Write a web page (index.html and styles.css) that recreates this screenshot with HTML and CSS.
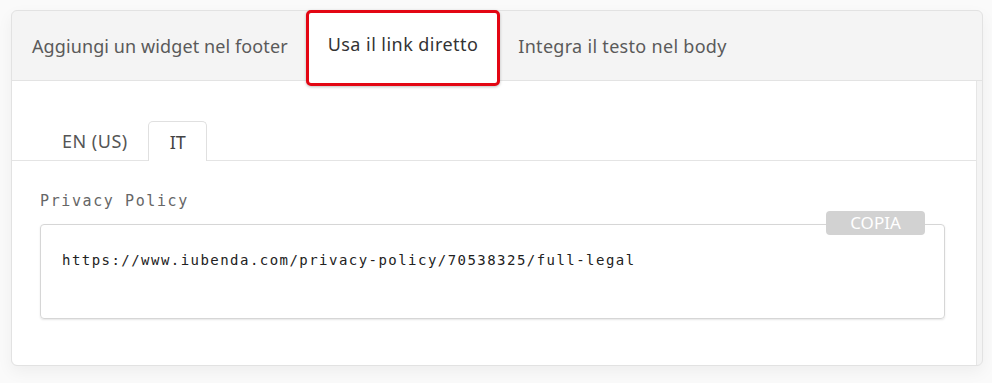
FILE: index.html
```html
<!DOCTYPE html>
<html lang="it">
<head>
    <meta charset="UTF-8">
    <meta name="viewport" content="width=device-width, initial-scale=1.0">
    <title>Link diretto</title>
    <link rel="stylesheet" href="styles.css">
</head>
<body>
    <div class="embed-card">
        <div class="embed-tabs">
            <div class="embed-tab">Aggiungi un widget nel footer</div>
            <div class="embed-tab active">Usa il link diretto</div>
            <div class="embed-tab">Integra il testo nel body</div>
        </div>

        <div class="embed-body">
            <div class="lang-tabs">
                <div class="lang-tab">EN (US)</div>
                <div class="lang-tab active">IT</div>
            </div>

            <div class="link-section">
                <div class="link-label">Privacy Policy</div>
                <div class="link-box">
                    <span class="copy-btn">COPIA</span>
                    <div class="link-url">https://www.iubenda.com/privacy-policy/70538325/full-legal</div>
                </div>
            </div>
        </div>
    </div>
</body>
</html>
```

FILE: styles.css
```css
body {
    margin: 0;
    background-color: #fafafa;
    font-family: "Noto Sans", Arial, sans-serif;
    height: 383px;
    overflow: hidden;
}
.embed-card {
    margin: 10px 9px 0 11px;
    height: 356px;
    box-sizing: border-box;
    background-color: #f4f4f4;
    border: 1px solid #e2e2e2;
    border-radius: 6px;
    box-shadow: 0 6px 16px rgba(0, 0, 0, 0.05);
    display: flex;
    flex-direction: column;
}
.embed-tabs {
    height: 69px;
    display: flex;
    align-items: stretch;
    padding-left: 11px;
    border-bottom: 1px solid #e3e3e3;
    border-radius: 6px 6px 0 0;
}
.embed-tab {
    display: flex;
    align-items: center;
    padding: 1px 9px 0 9px;
    font-size: 18px;
    letter-spacing: 0.1px;
    color: #5a5a5a;
}
.embed-tab:last-child {
    letter-spacing: 0.3px;
}
.embed-tab.active {
    margin: -1px 9px -6px 9px;
    padding: 0 19px 8px 19px;
    letter-spacing: 0.45px;
    background-color: #fff;
    color: #333;
    border: 3px solid #e30613;
    border-radius: 5px;
    box-shadow: 0 1px 3px rgba(0, 0, 0, 0.25);
    position: relative;
    z-index: 1;
}
.embed-body {
    flex: 1;
    background-color: #fff;
    margin-right: 5px;
    border-right: 1px solid #e6e6e6;
    border-radius: 0 0 0 6px;
    padding-top: 40px;
}
.lang-tabs {
    display: flex;
    padding-left: 30px;
    border-bottom: 1px solid #e4e4e4;
    height: 39px;
}
.lang-tab {
    display: flex;
    align-items: center;
    padding: 0 20px 0 20px;
    font-size: 18px;
    letter-spacing: 0.5px;
    color: #555;
}
.lang-tab.active {
    padding: 0 20px 0 21px;
    letter-spacing: 0;
    color: #444;
    background-color: #fff;
    border: 1px solid #e0e0e0;
    border-bottom: none;
    border-radius: 5px 5px 0 0;
    height: 40px;
    box-sizing: border-box;
}
.link-section {
    padding: 31px 31px 0 28px;
}
.link-label {
    font-family: "DejaVu Sans Mono", "Liberation Mono", monospace;
    font-size: 15px;
    letter-spacing: 1.6px;
    color: #666;
    margin-bottom: 14px;
}
.link-box {
    position: relative;
    height: 95px;
    box-sizing: border-box;
    border: 1px solid #d6d6d6;
    border-radius: 4px;
    box-shadow: 0 1px 2px rgba(0, 0, 0, 0.1);
    padding: 27px 21px;
}
.copy-btn {
    position: absolute;
    top: -14px;
    right: 19px;
    width: 99px;
    height: 24px;
    background-color: #d2d2d2;
    color: #fff;
    border-radius: 4px;
    font-size: 17px;
    line-height: 24px;
    text-align: center;
}
.link-url {
    font-family: "DejaVu Sans Mono", "Liberation Mono", monospace;
    font-size: 14px;
    letter-spacing: 1.46px;
    color: #222;
}
```
